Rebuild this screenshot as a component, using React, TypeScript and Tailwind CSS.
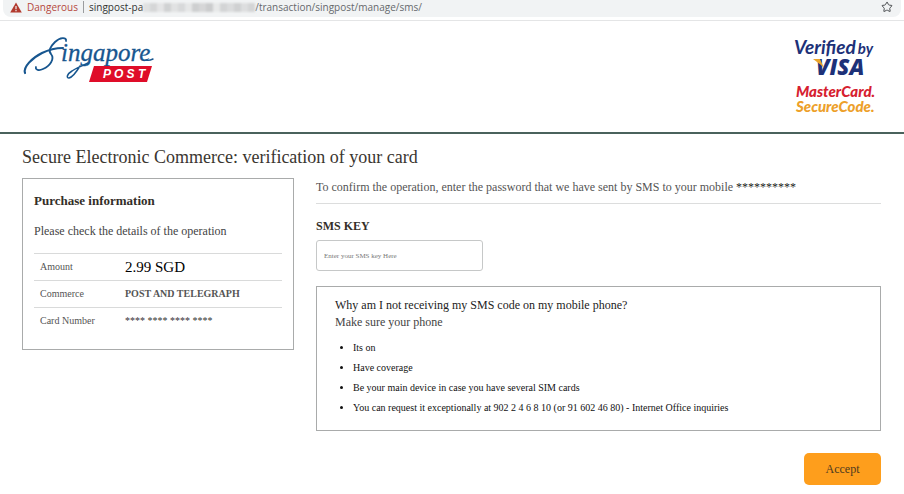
import { Star } from "lucide-react";

const details = [
  { label: "Amount", value: "2.99 SGD", style: "text-[15px] text-black" },
  { label: "Commerce", value: "POST AND TELEGRAPH", style: "text-[10px] font-bold text-[#555]" },
  { label: "Card Number", value: "**** **** **** ****", style: "text-[10px] text-[#333]" },
];

const tips = [
  "Its on",
  "Have coverage",
  "Be your main device in case you have several SIM cards",
  "You can request it exceptionally at 902 2 4 6 8 10 (or 91 602 46 80) - Internet Office inquiries",
];

const hiddenHost = [
  "bg-[#dcdddd]", "bg-[#cfd0d1]", "bg-[#e2e2e3]", "bg-[#c9cacb]", "bg-[#dedfdf]", "bg-[#d2d3d4]",
  "bg-[#e4e5e5]", "bg-[#c6c7c8]", "bg-[#d0d0d1]", "bg-[#c2c3c4]", "bg-[#e6e7e7]", "bg-[#cccdce]",
  "bg-[#d6d7d8]", "bg-[#c8c9ca]", "bg-[#d9dadb]", "bg-[#cdcecf]",
];

function AddressBar() {
  return (
    <div className="border-b border-[#e4e5e6] px-[3px] pb-[3px]">
      <div className="flex h-[17px] items-center rounded-b-lg bg-[#f1f3f4] pr-2 pb-[3px] pl-[7px] font-['Open_Sans','Noto_Sans',sans-serif] text-[10px] leading-[14px]">
        <svg viewBox="0 0 12 11" className="h-[11px] w-3" aria-hidden="true">
          <path d="M6 0.5 11.8 10.5H0.2Z" fill="#b23a2e" />
          <path d="M5.4 4h1.2v3.2H5.4zM5.4 8h1.2v1.2H5.4z" fill="#f1f3f4" />
        </svg>
        <span className="ml-[5px] text-[#b5483d]">Dangerous</span>
        <span className="mx-[5px] h-3 w-px bg-[#9a9c9e]" />
        <span className="text-[#333]">singpost-pa</span>
        <span className="flex h-[9px] w-28 opacity-80 blur-[1px]" aria-hidden="true">
          {hiddenHost.map((tone, i) => (
            <span key={i} className={`flex-1 ${tone}`} />
          ))}
        </span>
        <span className="text-[#66696c]">/transaction/singpost/manage/sms/</span>
        <button aria-label="Bookmark" className="ml-auto">
          <Star className="h-3 w-3" color="#4a4d50" strokeWidth={2} />
        </button>
      </div>
    </div>
  );
}

function SingaporePostLogo() {
  return (
    <svg viewBox="0 0 134 48" className="h-12 w-[134px]" role="img" aria-label="Singapore Post">
      <g fill="none" stroke="#17568f" strokeLinecap="round">
        <path d="M44 4C45 0 38 0 33 5 28 10 26 14 29 17 33 22 28 29 21 32 17 34 13 33 14 30" strokeWidth="1.800" />
        <path d="M3 36C1 30 10 21 20 16 26 13 33 11 41 11" strokeWidth="2.200" />
        <path d="M58 29C55 34 51 40 47 41 44 41 45 37 50 34 54 31 60 29 66 26" strokeWidth="1.500" />
        <path d="M124 23C127 24 129 23 131 22" strokeWidth="1.400" />
      </g>
      <text x="39" y="24" fill="#17568f" stroke="#17568f" strokeWidth="0.300" fontSize="25" fontStyle="italic" fontFamily="Liberation Serif, serif">
        ingapore
      </text>
      <path d="M72 29H130L125 45H67Z" fill="#df0d29" />
      <text x="81" y="41" fill="#fff" fontSize="12" fontWeight="bold" fontStyle="italic" fontFamily="Liberation Sans, sans-serif">
        P O S T
      </text>
    </svg>
  );
}

function CardSchemes() {
  return (
    <svg viewBox="0 0 88 80" className="h-20 w-[88px]" role="img" aria-label="Verified by Visa, MasterCard SecureCode">
      <g fontStyle="italic" fontFamily="Lato, sans-serif">
        <text x="0" y="16" fill="#1d3178" fontSize="19" fontWeight="700">
          Verified<tspan dx="2" fontSize="15">by</tspan>
        </text>
        <text x="22" y="37" fill="#1d3178" fontSize="22" fontWeight="800" fontFamily="Open Sans, sans-serif">VISA</text>
        <path d="M19 21H26L30 30 27 27Z" fill="#eaa52a" />
        <text x="2" y="59" fill="#d6202f" fontSize="15" fontWeight="900">MasterCard.</text>
        <text x="2" y="74" fill="#eda02a" fontSize="15" fontWeight="900">SecureCode.</text>
      </g>
    </svg>
  );
}

function PurchaseInformation() {
  return (
    <section className="w-[272px] shrink-0 self-start border border-[#a9abab] px-[11px] pt-[14px] pb-[14px]">
      <h2 className="text-[13px] leading-4 font-bold text-[#332e28]">Purchase information</h2>
      <p className="mt-[14px] text-[12px] leading-4 text-[#444]">Please check the details of the operation</p>
      <table className="mt-[14px] w-full text-left">
        <tbody>
          {details.map((row) => (
            <tr key={row.label} className="h-[27px] border-t border-[#d9dada]">
              <th className="w-[91px] pl-[6px] text-[10px] leading-4 font-normal text-[#555]">{row.label}</th>
              <td className={`leading-4 ${row.style}`}>{row.value}</td>
            </tr>
          ))}
        </tbody>
      </table>
    </section>
  );
}

function SmsConfirmation() {
  return (
    <section className="min-w-0 flex-1">
      <p className="border-b border-[#dcdddd] pt-px pb-2 text-[12px] leading-4 text-[#555]">
        To confirm the operation, enter the password that we have sent by SMS to your mobile{" "}
        <span className="text-[#222]">**********</span>
      </p>
      <label htmlFor="sms-key" className="mt-[14px] block text-[12px] leading-4 font-bold text-[#332e28]">
        SMS KEY
      </label>
      <input
        id="sms-key"
        type="text"
        autoComplete="off"
        placeholder="Enter your SMS key Here"
        className="mt-[6px] block h-[31px] w-[167px] rounded-[3px] border border-[#c6c8c8] px-[7px] text-[7px] placeholder:text-[#777]"
      />
      <div className="mt-[15px] border border-[#a9abab] px-[18px] pt-[10px] pb-3">
        <h3 className="text-[12px] leading-[17px] text-[#222]">Why am I not receiving my SMS code on my mobile phone?</h3>
        <p className="text-[12px] leading-[17px] text-[#444]">Make sure your phone</p>
        <ul className="mt-[7px] list-disc pl-[18px] text-[10px] leading-5 text-[#111]">
          {tips.map((tip) => (
            <li key={tip}>{tip}</li>
          ))}
        </ul>
      </div>
      <div className="mt-[22px] flex justify-end">
        <button type="button" className="h-8 w-[77px] rounded-[5px] bg-[#fe9e1c] text-[12px] text-[#4d3a20]">
          Accept
        </button>
      </div>
    </section>
  );
}

export default function App() {
  return (
    <div className="bg-white font-['Liberation_Serif',serif]">
      <AddressBar />
      <header className="flex h-[113px] items-start justify-between border-b-2 border-[#4a625c] pr-[22px] pl-[22px]">
        <div className="pt-4">
          <SingaporePostLogo />
        </div>
        <div className="pt-[17px]">
          <CardSchemes />
        </div>
      </header>
      <main className="pr-[23px] pb-2 pl-[22px]">
        <h1 className="pt-[11px] text-[18px] leading-6 text-[#3a3630]">
          Secure Electronic Commerce: verification of your card
        </h1>
        <div className="mt-[9px] flex gap-[22px]">
          <PurchaseInformation />
          <SmsConfirmation />
        </div>
      </main>
    </div>
  );
}
